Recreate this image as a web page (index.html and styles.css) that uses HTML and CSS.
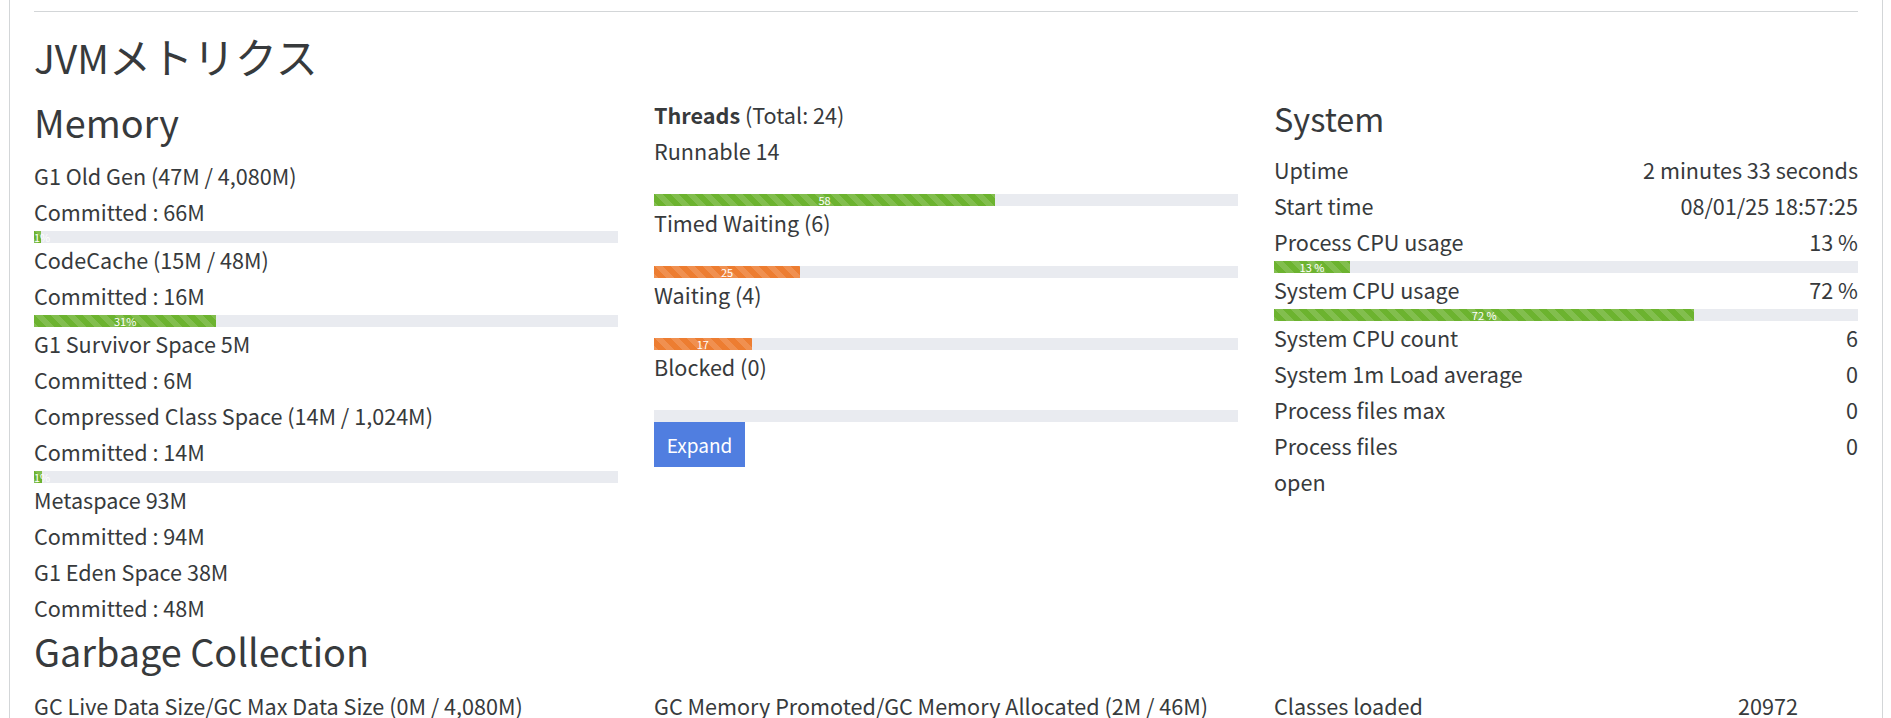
FILE: index.html
```html
<!DOCTYPE html>
<html lang="ja">
<head>
    <meta charset="UTF-8">
    <meta name="viewport" content="width=device-width, initial-scale=1.0">
    <title>JVMメトリクス</title>
    <link rel="stylesheet" href="styles.css">
</head>
<body>
    <div class="panel">
        <hr class="rule">
        <h2 class="page-title">JVM<span class="kana">メトリクス</span></h2>

        <div class="columns">
            <div class="col">
                <h4 class="memory-title">Memory</h4>

                <div class="line">G1 Old Gen (47M / 4,080M)</div>
                <div class="line">Committed : 66M</div>
                <div class="bar"><div class="fill green" style="width: 1.15%">1%</div></div>

                <div class="line">CodeCache (15M / 48M)</div>
                <div class="line">Committed : 16M</div>
                <div class="bar"><div class="fill green" style="width: 31.2%">31%</div></div>

                <div class="line">G1 Survivor Space 5M</div>
                <div class="line">Committed : 6M</div>

                <div class="line">Compressed Class Space (14M / 1,024M)</div>
                <div class="line">Committed : 14M</div>
                <div class="bar"><div class="fill green" style="width: 1.37%">1%</div></div>

                <div class="line">Metaspace 93M</div>
                <div class="line">Committed : 94M</div>

                <div class="line">G1 Eden Space 38M</div>
                <div class="line">Committed : 48M</div>
            </div>

            <div class="col">
                <div class="line"><b>Threads</b> (Total: 24)</div>

                <div class="line spaced">Runnable 14</div>
                <div class="bar"><div class="fill green" style="width: 58.4%">58</div></div>

                <div class="line spaced">Timed Waiting (6)</div>
                <div class="bar"><div class="fill orange" style="width: 25%">25</div></div>

                <div class="line spaced">Waiting (4)</div>
                <div class="bar"><div class="fill orange" style="width: 16.7%">17</div></div>

                <div class="line spaced">Blocked (0)</div>
                <div class="bar"></div>

                <button class="expand-btn">Expand</button>
            </div>

            <div class="col">
                <h4 class="system-title">System</h4>

                <div class="line split"><span>Uptime</span><span>2 minutes 33 seconds</span></div>
                <div class="line split"><span>Start time</span><span>08/01/25 18:57:25</span></div>
                <div class="line split"><span>Process CPU usage</span><span>13 %</span></div>
                <div class="bar"><div class="fill green" style="width: 13%">13 %</div></div>
                <div class="line split"><span>System CPU usage</span><span>72 %</span></div>
                <div class="bar"><div class="fill green" style="width: 72%">72 %</div></div>
                <div class="line split"><span>System CPU count</span><span>6</span></div>
                <div class="line split"><span>System 1m Load average</span><span>0</span></div>
                <div class="line split"><span>Process files max</span><span>0</span></div>
                <div class="line split"><span>Process files</span><span>0</span></div>
                <div class="line">open</div>
            </div>
        </div>

        <h3 class="gc-title">Garbage Collection</h3>

        <div class="columns">
            <div class="col">
                <div class="line">GC Live Data Size/GC Max Data Size (0M / 4,080M)</div>
            </div>
            <div class="col">
                <div class="line">GC Memory Promoted/GC Memory Allocated (2M / 46M)</div>
            </div>
            <div class="col">
                <div class="line split classes"><span>Classes loaded</span><span>20972</span></div>
            </div>
        </div>
    </div>
</body>
</html>
```

FILE: styles.css
```css
html, body {
    height: 100%;
    overflow: hidden;
}
body {
    margin: 0;
    background-color: #fff;
    color: #373a3c;
    font-family: "Noto Sans CJK JP", "Noto Sans", sans-serif;
    font-size: 21.6px;
}
.panel {
    margin: 0 8px 0 9px;
    padding: 11px 24px 0 24px;
    border-left: 1px solid #d3d6d8;
    border-right: 1px solid #d3d6d8;
    height: 100%;
    box-sizing: border-box;
}
.rule {
    margin: 0;
    border: none;
    border-top: 1px solid #d3d6d8;
}
h2, h3, h4 {
    margin: 0;
    font-weight: 400;
}
.page-title {
    height: 86px;
    font-size: 39px;
    line-height: 88px;
}
.kana {
    font-size: 42px;
}
.memory-title {
    font-size: 37.8px;
    line-height: 47px;
    margin-bottom: 14px;
}
.system-title {
    font-size: 32.4px;
    line-height: 40px;
    margin-bottom: 15px;
}
.gc-title {
    font-size: 37.8px;
    line-height: 48px;
    margin-bottom: 14px;
}
.columns {
    display: grid;
    grid-template-columns: repeat(3, 1fr);
    gap: 36px;
}
.line {
    line-height: 34px;
    padding-bottom: 2px;
    white-space: nowrap;
}
.spaced {
    margin-bottom: 24px;
}
.split {
    display: flex;
    justify-content: space-between;
}
.classes {
    padding-right: 60px;
}
.bar {
    height: 12px;
    background-color: #e9ebf0;
    overflow: hidden;
}
.fill {
    height: 100%;
    color: #fff;
    font-size: 11px;
    line-height: 12px;
    text-align: center;
    white-space: nowrap;
    background-image: linear-gradient(45deg, rgba(255,255,255,.15) 25%, transparent 25%, transparent 50%, rgba(255,255,255,.15) 50%, rgba(255,255,255,.15) 75%, transparent 75%, transparent);
    background-size: 16px 16px;
}
.green {
    background-color: #6cb32f;
}
.orange {
    background-color: #ed7d31;
}
.expand-btn {
    display: block;
    width: 91px;
    height: 45px;
    padding: 0;
    border: none;
    background-color: #507ee0;
    color: #fff;
    font-family: inherit;
    font-size: 19px;
    cursor: pointer;
}
```
